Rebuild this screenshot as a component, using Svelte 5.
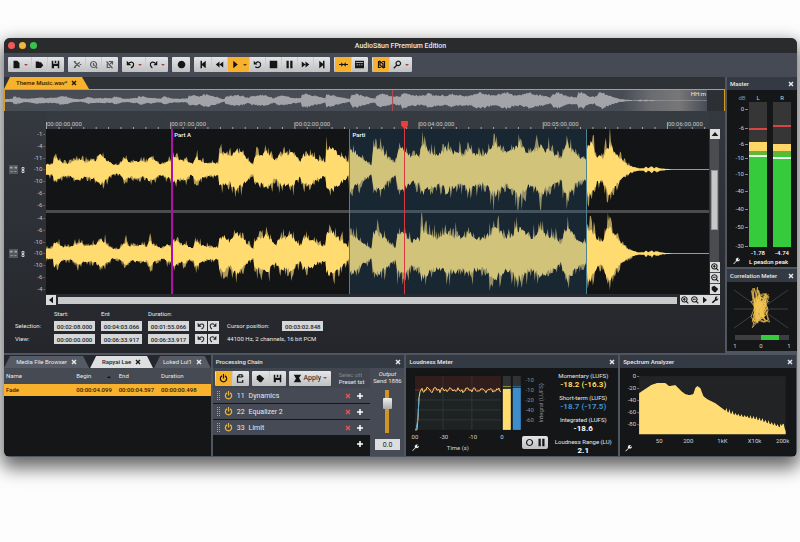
<script lang="ts">
    type Glyph = { fill?: string; line?: string };

    // 12x12 icon shapes
    const icons: Record<string, Glyph> = {
        file: { fill: "M2 1h5l3 3v7H2z" },
        folder: { fill: "M1 2h4l1 1h2l3 4-3 3.500H1z" },
        save: { fill: "M1 1h2v4h6V1h2v10H9V8H4v3H1zM5 1h2v3H5z" },
        cut: { line: "M2 3l7 6M2 9l7-6M1 2h2v2M1 10h2V8M9 6h2" },
        copy: { line: "M6 2a4 4 0 1 0 .1 0M9 9l2 2M6 4v3h2" },
        paste: { line: "M2 2l8 9M3 5v5h4M5 2h5v4M7 5l2-2" },
        undo: { fill: "M1 1v6h6z", line: "M4 4c4-2.500 7 0 6 3-.5 2-2 3-3.500 3.500" },
        redo: { fill: "M11 1v6H6z", line: "M8 4C4 1 1 4 2 7c.5 2 1.500 3 2.500 3.500" },
        record: { fill: "M6 1a5 5 0 1 0 .1 0z" },
        first: { fill: "M2 1h2v4l5-4v10L4 7v4H2z" },
        rewind: { fill: "M6 2v8L1 6zM11 2v8L6 6z" },
        play: { fill: "M3 1l6 5-6 5z" },
        loop: { fill: "M1 1v5h5z", line: "M4 4c3-3 7-.5 6 3-1 3-4 4-7 2" },
        stop: { fill: "M1 1h10v10H1z" },
        pause: { fill: "M2 1h3v10H2zM7 1h3v10H7z" },
        forward: { fill: "M6 2v8l5-4zM1 2v8l5-4z" },
        last: { fill: "M10 1H8v4L3 1v10l5-4v4h2z" },
        snap: { fill: "M3 3l3 3-3 3zM9 3L6 6l3 3z", line: "M0 6h12" },
        bands: { fill: "M0 1h12v10H0zM1 3v1h10V3zM2 6v1h2V6zM5 6v1h2V6zM8 6v1h2V6z" },
        marker: { line: "M5 2H2v8h3M7 2h3v8H7M4 2v5l4 3V5z" },
        zoom: { line: "M7 1.500a3 3 0 1 0 .1 0M5 7l-4 4" },
        zoomIn: { line: "M5 1a4 4 0 1 0 .1 0M8 8l3 3M3 5h4M5 3v4" },
        zoomOut: { line: "M5 1a4 4 0 1 0 .1 0M8 8l3 3M3 5h4" },
        left: { fill: "M9 1v10L3 6z" },
        right: { fill: "M3 1v10l6-5z" },
        up: { fill: "M6 3l5 6H1z" },
        wrench: { fill: "M1 9.500L6 5c-1-3 1-5 4-4L8 3l1 1.500 2-1c0 3-2 4-4 3.500L3 11z" },
        close: { fill: "M1 3l2-2 3 3 3-3 2 2-3 3 3 3-2 2-3-3-3 3-2-2 3-3z" },
        plus: { fill: "M4.500 0h3v4.500H12v3H7.500V12h-3V7.500H0v-3h4.500z" },
        power: { line: "M4 2.500a4.200 4.200 0 1 0 4 0M6 0v6" },
        clip: { line: "M8 3h2M4 3H2v8h7V8M4 1h4v3H4z" },
        tag: { fill: "M1 3l4-2 6 5-4 5H5L1 7z" },
        apply: { fill: "M1 1h10L8 5l3 6H1l3-5z" },
        ring: { line: "M6 2a4 4 0 1 0 .1 0" },
        link: { line: "M4 1h4v4H4zM4 7h4v4H4z" },
    };

    const toolGroups = [
        [["file", "menu"], ["folder"], ["save"]],
        [["cut", "dim"], ["copy", "dim"], ["paste", "dim"]],
        [["undo", "menu"], ["redo", "menu"]],
        [["record"]],
        [["first"], ["rewind"], ["play", "menu on"], ["loop"], ["stop"], ["pause"], ["forward"], ["last"]],
        [["snap", "on"], ["bands"]],
        [["marker", "on"], ["zoom", "menu"]],
    ];

    // Waveform envelope: x, half height
    const trackWidth = 662;
    const envelope = [
        [0, 5], [7, 5], [8, 12], [12, 10], [17, 6], [24, 6], [29, 9], [34, 10], [39, 7], [49, 9], [54, 13],
        [57, 13], [60, 9], [66, 5], [71, 4], [75, 6], [79, 11], [84, 7], [94, 8], [101, 7], [103, 13],
        [106, 10], [112, 6], [117, 5], [121, 8], [124, 7], [126, 12], [130, 12], [134, 9], [139, 9],
        [144, 6], [147, 6], [150, 13], [154, 9], [160, 6], [172, 6], [173, 14], [178, 16], [183, 12],
        [187, 17], [190, 19], [194, 17], [199, 12], [203, 7], [207, 4], [208, 13], [216, 15], [221, 17],
        [225, 13], [230, 8], [232, 14], [239, 15], [245, 17], [250, 11], [254, 7], [257, 14], [264, 14],
        [271, 9], [279, 7], [280, 18], [285, 21], [290, 16], [296, 12], [302, 6], [303, 19], [307, 18],
        [314, 12], [320, 8], [325, 4], [327, 20], [332, 20], [338, 15], [344, 9], [349, 6], [351, 17],
        [356, 20], [362, 15], [366, 11], [370, 15], [373, 12], [375, 24], [379, 20], [386, 16], [392, 15],
        [397, 17], [399, 22], [403, 18], [410, 17], [416, 14], [422, 20], [428, 16], [434, 14], [440, 16],
        [445, 22], [449, 24], [454, 20], [459, 16], [464, 17], [470, 24], [473, 25], [479, 18], [485, 16],
        [491, 20], [494, 24], [500, 18], [507, 16], [514, 9], [518, 22], [521, 25], [527, 17], [532, 12],
        [539, 10], [541, 25], [545, 24], [550, 13], [556, 11], [560, 22], [563, 24], [568, 17], [574, 10],
        [580, 5], [584, 3], [588, 2], [592, 1], [597, 1], [599, 3], [601, 1], [605, 3], [607, 1], [610, 2],
        [613, 1], [619, 0.5], [630, 0], [662, 0],
    ];

    function random(seed: number) {
        let s = seed;
        return () => {
            s = (s * 16807) % 2147483647;
            return s / 2147483647;
        };
    }

    function heightAt(x: number) {
        const i = Math.max(1, envelope.findIndex((p) => p[0] >= x));
        const [x0, h0] = envelope[i - 1];
        const [x1, h1] = envelope[i];
        return h0 + ((h1 - h0) * (x - x0)) / (x1 - x0);
    }

    function wave(seed: number, mid: number, gain: number, spikes: boolean) {
        const rnd = random(seed);
        const half = (dir: number) => {
            const points: string[] = [];
            for (let x = 0; x <= trackWidth; x++) {
                let h = heightAt(x) * (0.85 + rnd() * 0.35);
                const r = rnd();
                if (spikes)
                    h *= r > 0.9 ? 1.6 : r > 0.65 ? 1.35 : 1;
                points.push(`${x},${(mid + dir * Math.max(0.3, h * gain)).toFixed(1)}`);
            }
            return points;
        };
        return [...half(-1), ...half(1).reverse()].join(" ");
    }

    const tracks = [
        { seed: 71, levels: ["-1", "-4", "-11", "-10", "-10", "-6", "-6"] },
        { seed: 1234, levels: ["-4", "-6", "-10", "-10", "-10", "-6", "-4"] },
    ];

    const times = ["00:00:00.000", "00:01:00.000", "00:02:00.000", "00:04:00.000", "00:05:00.000", "00:06:00.000"];
    const percent = (x: number) => (x / trackWidth) * 100 + "%";

    const meterScale = [["0", 17], ["-6", 36], ["-6", 52], ["-10", 66], ["-10", 82], ["-40", 99], ["-40", 117], ["-50", 135], ["-30", 154]];
    const meters = [
        { x: 22, peak: 38, top: 52, hold: 65, name: "L", value: "-1.78" },
        { x: 46, peak: 35, top: 54, hold: 67, name: "R", value: "-4.74" },
    ];

    // Phase scope trace
    const scope = (() => {
        const rnd = random(99);
        let d = "M30 8";
        for (let i = 0; i < 60; i++) {
            const t = i * 1.9;
            const x = 33 + Math.sin(t * 1.7) * (4 + rnd() * 6);
            const y = 27 + Math.cos(t) * (8 + rnd() * 14);
            d += ` Q${(33 + (rnd() - 0.5) * 18).toFixed(1)} ${(27 + (rnd() - 0.5) * 46).toFixed(1)} ${x.toFixed(1)} ${y.toFixed(1)}`;
        }
        return d;
    })();

    const loudness = (() => {
        const rnd = random(5);
        let d = "M9 62L11 62 12 50 13 30 14 24 15 22";
        for (let x = 16; x <= 95; x++)
            d += ` ${x} ${(22 + Math.sin(x * 0.8) * 1.2 + (rnd() - 0.5) * 4).toFixed(1)}`;
        return d;
    })();

    const spectrum = (() => {
        const curve = [
            [0, 17], [6, 13], [12, 9], [18, 7], [26, 7], [30, 10], [36, 9], [38, 11], [42, 15], [46, 18],
            [50, 19], [54, 18], [56, 12], [58, 10], [61, 12], [64, 20], [68, 23], [76, 27], [84, 33],
            [96, 38], [120, 43], [141, 50], [143, 47], [146, 54],
        ];
        const rnd = random(41);
        let d = "M0 58";
        for (let x = 0; x <= 146; x++) {
            const i = Math.max(1, curve.findIndex((p) => p[0] >= x));
            const [a, b] = [curve[i - 1], curve[i]];
            const noise = x > 84 ? (x % 3 === 0 ? -2 : 1) * (0.4 + rnd()) : 0;
            d += `L${x} ${(a[1] + ((b[1] - a[1]) * (x - a[0])) / (b[0] - a[0]) + noise).toFixed(1)}`;
        }
        return d + "V58Z";
    })();

    const effects = [
        { no: "11", name: "Dynamics" },
        { no: "22", name: "Equalizer 2" },
        { no: "33", name: "Limit" },
    ];

    const stats = [
        { name: "Momentary (LUFS)", value: "-18.2 (-16.3)", tone: "yellow" },
        { name: "Short-term (LUFS)", value: "-18.7 (-17.5)", tone: "blue" },
        { name: "Integrated (LUFS)", value: "-18.6", tone: "white" },
        { name: "Loudness Range (LU)", value: "2.1", tone: "white" },
    ];
</script>

{#snippet icon(name: string)}
    <svg class="icon" viewBox="0 0 12 12" aria-hidden="true">
        {#if icons[name].fill}<path d={icons[name].fill} fill="currentColor" fill-rule="evenodd" />{/if}
        {#if icons[name].line}<path d={icons[name].line} fill="none" stroke="currentColor" stroke-width="1.6" />{/if}
    </svg>
{/snippet}

{#snippet panelHead(title: string)}
    <header class="panel-head">
        <h2>{title}</h2>
        <button class="bare" aria-label="Close {title}">{@render icon("close")}</button>
    </header>
{/snippet}

<div class="desktop">
<div class="window">
    <div class="titlebar">
        <div class="lights"><i class="red"></i><i class="amber"></i><i class="green"></i></div>
        <h1>AudioSäun FPremium Edition</h1>
    </div>

    <div class="toolbar">
        {#each toolGroups as group}
            <div class="group">
                {#each group as [name, kind]}
                    <button class="tool {kind ?? ''}" aria-label={name}>
                        {@render icon(name)}
                        {#if kind?.includes("menu")}<span class="caret"></span>{/if}
                    </button>
                {/each}
            </div>
        {/each}
    </div>

    <div class="middle">
        <main class="editor">
            <div class="file-tabs">
                <div class="file-tab">
                    <span>Theme Music.wav*</span>
                    <button class="bare" aria-label="Close file">{@render icon("close")}</button>
                </div>
            </div>

            <div class="overview">
                <div class="overview-wave">
                    <svg viewBox="0 0 662 22" preserveAspectRatio="none">
                        <polygon points={wave(31, 11, 0.32, false)} fill="#a3a4aa" />
                        <rect x="365" width="1" height="22" fill="#b04a50" />
                    </svg>
                    <span class="overview-label">HH:m</span>
                </div>
            </div>

            <div class="tracks">
                <div class="gutter">
                    {#each tracks as track}
                        <div class="gutter-track">
                            <button class="bare mute" aria-label="Channel">
                                <svg viewBox="0 0 10 10"><rect width="10" height="10" fill="#54575c" /><path d="M1 2h3v2H1zM6 2h3v2H6zM1 7l2 1 2-1 2 1 2-1" fill="#a5a6a8" /></svg>
                            </button>
                            <span class="link">{@render icon("link")}</span>
                            <ol class="levels">
                                {#each track.levels as level}<li>{level}</li>{/each}
                            </ol>
                        </div>
                    {/each}
                </div>

                <div class="timeline">
                    <div class="ruler">
                        <svg viewBox="0 0 662 18" preserveAspectRatio="none">
                            {#each Array(54) as _, i}
                                <rect x={(i * 124) / 10} y={i % 10 ? 16 : 11} width="1" height="7" fill="#a4a7ab" />
                            {/each}
                        </svg>
                        {#each times as time, i}
                            <span class="time" style="left: {percent(i * 124)}">{time}</span>
                        {/each}
                    </div>
                    {#each tracks as track}
                        <svg class="track" viewBox="0 0 662 81" preserveAspectRatio="none">
                            <polygon points={wave(track.seed, 40.5, 1, true)} fill="#b39c58" />
                            <polygon points={wave(track.seed, 40.5, 1, false)} fill="#ffdb70" />
                        </svg>
                    {/each}
                    <div class="region" style="left: {percent(303)}; width: {percent(237)}"><span>Parti</span></div>
                    <div class="part" style="left: {percent(125)}"><span>Part A</span></div>
                    <div class="playhead" style="left: {percent(357)}">
                        <svg viewBox="0 0 6 7"><path d="M0 0h6v4L3 7 0 4z" fill="#ee3d3d" /></svg>
                    </div>
                </div>

                <div class="vscroll">
                    <button class="step" aria-label="Scroll up">{@render icon("up")}</button>
                    <div class="vtrack"><div class="vthumb"></div></div>
                    <button class="step" aria-label="Zoom in vertically">{@render icon("zoomIn")}</button>
                    <button class="step" aria-label="Zoom out vertically">{@render icon("zoomOut")}</button>
                    <button class="step" aria-label="Fit height">{@render icon("tag")}</button>
                </div>
            </div>

            <div class="hscroll">
                <button class="step" aria-label="Scroll left">{@render icon("left")}</button>
                <div class="hthumb"></div>
                <button class="step" aria-label="Zoom in">{@render icon("zoomIn")}</button>
                <button class="step" aria-label="Zoom out">{@render icon("zoomOut")}</button>
                <button class="step" aria-label="Scroll right">{@render icon("right")}</button>
                <button class="step" aria-label="Scroll settings">{@render icon("wrench")}</button>
            </div>

            <div class="info">
                <span></span>
                <label for="sel-start">Start:</label>
                <label for="sel-end">Ent</label>
                <label for="sel-length">Duration:</label>
                <span></span>
                <span></span>

                <span>Selection:</span>
                <input id="sel-start" value="00:02:08.000">
                <input id="sel-end" value="00:04:03.066">
                <input id="sel-length" value="00:01:55.066">
                <div class="pair">
                    <button aria-label="Undo selection">{@render icon("undo")}</button>
                    <button aria-label="Redo selection">{@render icon("redo")}</button>
                </div>
                <div class="note">
                    <label for="cursor">Cursor position:</label>
                    <input id="cursor" value="00:03:02.848">
                </div>

                <span>View:</span>
                <input aria-label="View start" value="00:00:00.000">
                <input aria-label="View end" value="00:06:33.917">
                <input aria-label="View duration" value="00:06:33.917">
                <div class="pair">
                    <button aria-label="Undo view">{@render icon("undo")}</button>
                    <button aria-label="Redo view">{@render icon("redo")}</button>
                </div>
                <div class="note">44100 Hz, 2 channels, 16 bit PCM</div>
            </div>
        </main>

        <aside class="side">
            <section class="panel">
                {@render panelHead("Master")}
                <svg class="meter" viewBox="0 0 70 177">
                    <text x="15" y="10" text-anchor="middle" class="faint">dB</text>
                    {#each meterScale as [label, y]}
                        <text x="17" y={Number(y) + 4} text-anchor="end">{label}</text>
                        <rect x="18" y={Number(y) + 2} width="3" height="1" fill="#888" />
                    {/each}
                    {#each meters as m}
                        <text x={m.x + 9} y="10" text-anchor="middle">{m.name}</text>
                        <rect x={m.x} y="12" width="18" height="145" fill="#363636" />
                        <rect x={m.x} y={m.peak} width="18" height="2" fill="#d84545" />
                        <rect x={m.x} y={m.top} width="18" height={61 - m.top} fill="#ffd767" />
                        <rect x={m.x} y="61" width="18" height="4" fill="#63b536" />
                        <rect x={m.x} y="65" width="18" height="92" fill="#36cb3c" />
                        <rect x={m.x} y={m.hold} width="18" height="2" fill="#e8f8e8" />
                        <text x={m.x + 9} y="165" text-anchor="middle" class="strong">{m.value}</text>
                    {/each}
                    <path d="M6 174l3-3c-1-2 1-4 3-3l-1 1v1l2-1c0 2-2 3-3 2l-3 3z" fill="#eee" />
                    <text x="22" y="174" class="strong">L peadɑn peak</text>
                </svg>
            </section>
            <section class="panel">
                {@render panelHead("Correlation Meter")}
                <svg class="meter" viewBox="0 0 70 69">
                    <path d="M7 8l54 38M61 8L7 46M7 27h54" stroke="#3c3f42" fill="none" />
                    <path d={scope} stroke="#f2c451" stroke-width=".7" fill="none" />
                    <rect x="8" y="53" width="54" height="5" fill="#3c3e40" />
                    <rect x="34" y="53" width="18" height="5" fill="#36cb3c" />
                    <text x="8" y="66" text-anchor="middle">1</text>
                    <text x="34" y="66" text-anchor="middle">0</text>
                    <text x="62" y="66" text-anchor="middle">1</text>
                </svg>
            </section>
        </aside>
    </div>

    <div class="bottom">
        <section class="panel">
            <div class="tabs">
                <button class="tab">Media File Browser {@render icon("close")}</button>
                <button class="tab active">Rapyai Lae {@render icon("close")}</button>
                <button class="tab">Loked Lul1 {@render icon("close")}</button>
            </div>
            <table>
                <thead>
                    <tr><th class="name">Name</th><th>Begin <span class="sort"></span></th><th>End</th><th class="last">Duration</th></tr>
                </thead>
                <tbody>
                    <tr><td>Fade</td><td>00:00:04.099</td><td>00:00:04.597</td><td>00:00:00.498</td></tr>
                </tbody>
            </table>
        </section>

        <section class="panel">
            {@render panelHead("Processing Chain")}
            <div class="chain">
                <div class="chain-main">
                    <div class="chain-tools">
                        <div class="group">
                            <button class="tool on" aria-label="Enable chain">{@render icon("power")}</button>
                            <button class="tool" aria-label="Paste chain">{@render icon("clip")}</button>
                        </div>
                        <div class="group">
                            <button class="tool" aria-label="Preset">{@render icon("tag")}</button>
                            <button class="tool" aria-label="Save chain">{@render icon("save")}</button>
                        </div>
                        <div class="group">
                            <button class="tool apply">{@render icon("apply")}Apply<span class="caret"></span></button>
                        </div>
                        <p class="preset"><span>Selec ott</span><br>Preset tst</p>
                    </div>
                    <ul class="effects">
                        {#each effects as effect}
                            <li>
                                <span class="grip"></span>
                                <button class="bare power" aria-label="Toggle {effect.name}">{@render icon("power")}</button>
                                <span class="number">{effect.no}</span>
                                <span class="effect-name">{effect.name}</span>
                                <button class="bare remove" aria-label="Remove {effect.name}">{@render icon("close")}</button>
                                <button class="bare add" aria-label="Add after {effect.name}">{@render icon("plus")}</button>
                            </li>
                        {/each}
                        <li class="empty"><button class="bare add" aria-label="Add effect">{@render icon("plus")}</button></li>
                    </ul>
                </div>
                <div class="output">
                    <label for="gain"><i>Output</i><br>Send 1886</label>
                    <input id="gain" type="range" min="0" max="100" value="76">
                    <input class="gain-value" aria-label="Gain" value="0.0">
                </div>
            </div>
        </section>

        <section class="panel">
            {@render panelHead("Loudness Meter")}
            <div class="loudness">
                <svg class="chart" viewBox="0 0 142 88">
                    <rect x="9" y="8" width="86" height="54" fill="#1e2223" />
                    <rect x="9" y="8" width="86" height="14" fill="#321d1d" />
                    <path d="M9 32h86M9 42h86M9 52h86M37 8v54M66 8v54" stroke="#303536" />
                    <path d="M9 22h86" stroke="#8e2a2a" />
                    <path d={loudness} stroke="#f5cf6b" fill="none" />
                    <path d="M10 62L12 50 13 30" stroke="#5da3cc" fill="none" />
                    <rect x="97" y="8" width="8" height="54" fill="#303335" />
                    <rect x="107" y="8" width="8" height="54" fill="#303335" />
                    <rect x="97" y="21" width="8" height="41" fill="#ffdc6b" />
                    <rect x="97" y="18" width="8" height="1" fill="#8f8b3a" />
                    <rect x="107" y="20" width="8" height="42" fill="#3c8dc9" />
                    <rect x="107" y="18" width="8" height="1" fill="#38617e" />
                    {#each ["-10", "-10", "-20", "-40", "-60"] as label, i}
                        <text x="128" y={14 + i * 10} text-anchor="end" class="faint">{label}</text>
                    {/each}
                    <text x="-35" y="137" transform="rotate(-90)" text-anchor="middle" class="faint">Integral (LUFS)</text>
                    {#each ["00", "-30", "-10", "0"] as label, i}
                        <text x={9 + i * 29} y="71" text-anchor="middle">{label}</text>
                    {/each}
                    <text x="52" y="82" text-anchor="middle">Time (s)</text>
                    <path d="M6 83l3-3c-1-2 1-4 3-3l-1 1v1l2-1c0 2-2 3-3 2l-3 3z" fill="#eee" />
                </svg>
                <div class="group transport">
                    <button class="tool" aria-label="Reset">{@render icon("ring")}</button>
                    <button class="tool" aria-label="Pause">{@render icon("pause")}</button>
                </div>
                <dl class="stats">
                    {#each stats as stat}
                        <dt>{stat.name}</dt>
                        <dd class={stat.tone}>{stat.value}</dd>
                    {/each}
                </dl>
            </div>
        </section>

        <section class="panel">
            {@render panelHead("Spectrum Analyzer")}
            <svg class="chart" viewBox="0 0 175 88">
                <rect x="19" y="8" width="146" height="58" fill="#212324" />
                <g transform="translate(19 8)"><path d={spectrum} fill="#ffdc74" /></g>
                {#each ["0", "-20", "-40", "-60", "-80"] as label, i}
                    <text x="16" y={10 + i * 12} text-anchor="end">{label}</text>
                    <rect x="17" y={8 + i * 12} width="2" height="1" fill="#777" />
                {/each}
                {#each [["50", 39], ["200", 68], ["1kK", 102], ["X10k", 134], ["200k", 162]] as [label, x]}
                    <text {x} y="75" text-anchor="middle">{label}</text>
                {/each}
                <path d="M5 83l3-3c-1-2 1-4 3-3l-1 1v1l2-1c0 2-2 3-3 2l-3 3z" fill="#eee" />
            </svg>
        </section>
    </div>
</div>
</div>

<style>
    :global(body) {
        background: #fdfdfd;
    }

    .desktop {
        padding: 38px 3px 60px 4px;
    }

    .window {
        border-radius: 6px;
        overflow: hidden;
        background: #50565f;
        box-shadow: 0 8px 18px 3px rgba(0, 0, 0, 0.6);
        color: #e8e9ea;
        font: 6px/8px Roboto, "Liberation Sans", sans-serif;
    }

    .window :global(*) {
        box-sizing: border-box;
    }

    h1, h2, p, ol, ul, dl, dd {
        margin: 0;
        padding: 0;
        list-style: none;
    }

    h1, h2 {
        font-weight: 500;
    }

    button, input {
        margin: 0;
        padding: 0;
        border: 0;
        border-radius: 0;
        font: inherit;
        color: inherit;
    }

    button {
        display: flex;
        align-items: center;
        justify-content: center;
        background: none;
    }

    svg {
        display: block;
    }

    .icon {
        width: 8px;
        height: 8px;
        flex: none;
    }

    .tool .icon {
        width: 9px;
        height: 9px;
    }

    .bare .icon {
        width: 6px;
        height: 6px;
    }

    .titlebar {
        display: grid;
        grid-template-columns: 1fr auto 1fr;
        align-items: center;
        height: 15px;
        padding: 0 4px;
        background: #2a2b2d;
    }

    h1 {
        font-size: 7px;
    }

    .lights {
        display: flex;
        gap: 4px;
    }

    .lights i {
        width: 7px;
        height: 7px;
        border-radius: 50%;
    }

    .red { background: #f4595a; }
    .amber { background: #f5b43c; }
    .green { background: #37c44c; }

    .toolbar {
        display: flex;
        align-items: center;
        gap: 4px;
        height: 24px;
        padding: 0 4px 1px;
        background: #454a54;
    }

    .group {
        display: flex;
        padding: 0 1px;
        border-radius: 1px;
        background: linear-gradient(#e4e5e6, #bfc0c2);
    }

    .tool {
        width: 16px;
        height: 15px;
        color: #151515;
    }

    .tool + .tool {
        border-left: 1px solid #c9cacb;
    }

    .tool.menu {
        width: 22px;
        gap: 3px;
    }

    .tool.dim {
        color: #55575a;
    }

    .tool.on {
        background: #f8b12c;
    }

    .caret {
        border: 2px solid transparent;
        border-top-color: #a5484c;
        border-bottom: 0;
    }

    .on .caret {
        border-top-color: #5a3a08;
    }

    .middle {
        display: grid;
        grid-template-columns: 1fr 70px;
        gap: 2px;
    }

    .editor {
        background: linear-gradient(#373b42, #24262b);
    }

    .file-tabs {
        height: 12px;
        background: #2e3237;
    }

    .file-tab {
        display: flex;
        align-items: center;
        gap: 4px;
        width: 85px;
        height: 12px;
        padding-left: 12px;
        background: #f8b12c;
        color: #2b1d00;
        font-weight: 500;
        clip-path: polygon(6px 0, 78px 0, 100% 100%, 0 100%);
    }

    .overview {
        height: 22px;
        padding-right: 17px;
        border: 1px solid #d9981f;
        border-bottom: 0;
        background: #2c2f34;
    }

    .overview-wave {
        position: relative;
        background: linear-gradient(90deg, #484c55 88%, #6a6c70 92%, #777 96%, #484c55);
    }

    .overview-wave svg {
        width: 100%;
        height: 21px;
    }

    .overview-label {
        position: absolute;
        top: 0;
        right: 1px;
    }

    .tracks {
        display: grid;
        grid-template-columns: 42px 1fr 10px;
        padding-right: 6px;
    }

    .gutter {
        display: grid;
        grid-template-rows: 81px 81px;
        gap: 3px;
        padding-top: 18px;
    }

    .gutter-track {
        display: grid;
        grid-template-columns: 10px 5px 1fr;
        gap: 2px;
        align-items: center;
        padding-left: 4px;
    }

    .mute svg {
        width: 9px;
        height: 9px;
    }

    .link .icon {
        width: 6px;
        height: 8px;
    }

    .levels {
        display: flex;
        flex-direction: column;
        justify-content: space-between;
        height: 79px;
        padding-right: 1px;
        text-align: right;
        color: #c3c5c8;
    }

    .levels li::after {
        content: "-";
        margin-left: 1px;
    }

    .timeline {
        position: relative;
        display: flex;
        flex-direction: column;
        gap: 3px;
        background: #4b4c4e;
    }

    .ruler {
        position: relative;
        height: 18px;
        margin-bottom: -3px;
        background: #363a41;
    }

    .ruler svg {
        width: 100%;
        height: 18px;
    }

    .time {
        position: absolute;
        top: 9px;
        padding-left: 1px;
        color: #c6c8cb;
    }

    .track {
        width: 100%;
        height: 81px;
        background: #131415;
    }

    .region, .part, .playhead {
        position: absolute;
        top: 18px;
        bottom: 0;
    }

    .region {
        border-left: 1px solid #4c8296;
        border-right: 1px solid #4c8296;
        background: rgba(50, 110, 160, 0.22);
    }

    .region span, .part span {
        display: block;
        padding: 2px;
        color: #fff;
        font-weight: 500;
        white-space: nowrap;
    }

    .part {
        border-left: 2px solid #b010a4;
    }

    .part span {
        padding-left: 1px;
    }

    .playhead {
        top: 10px;
        border-left: 1px solid #d93a42;
    }

    .playhead svg {
        width: 7px;
        height: 8px;
        margin-left: -4px;
    }

    .vscroll {
        display: flex;
        flex-direction: column;
        gap: 1px;
        margin: 18px 0 0 1px;
        background: #4a4c50;
    }

    .step {
        width: 10px;
        height: 10px;
        flex: none;
        background: #dcdcdd;
        color: #181818;
    }

    .vtrack {
        flex: 1;
        padding: 30px 1px;
    }

    .vthumb {
        height: 60px;
        background: #c6c7c9;
        border: 1px solid #96979a;
    }

    .hscroll {
        display: flex;
        align-items: center;
        height: 12px;
        padding: 0 5px 0 42px;
    }

    .hthumb {
        flex: 1;
        height: 7px;
        margin: 0 3px 0 2px;
        background: #c9cacb;
    }

    .info {
        display: grid;
        grid-template-columns: 33px 41px 41px 41px 24px 1fr;
        grid-template-rows: 8px 10px 10px;
        gap: 3px 6px;
        align-items: center;
        padding: 4px 0 9px 11px;
    }

    .info input {
        width: 41px;
        height: 10px;
        background: #d6d7d8;
        color: #222;
        font-weight: 500;
        text-align: center;
    }

    .pair {
        display: grid;
        grid-template-columns: 1fr 1fr;
        gap: 1px;
    }

    .pair button {
        height: 10px;
        background: #dadbdc;
        color: #222;
    }

    .note {
        display: flex;
        align-items: center;
        gap: 13px;
        padding-left: 2px;
    }

    .side {
        display: flex;
        flex-direction: column;
        gap: 2px;
    }

    .panel {
        display: flex;
        flex-direction: column;
        min-width: 0;
        background: #141618;
    }

    .panel-head {
        display: flex;
        align-items: center;
        justify-content: space-between;
        height: 13px;
        padding: 0 3px;
        background: #343a43;
    }

    h2 {
        font-size: 6px;
        white-space: nowrap;
    }

    text {
        font-size: 6px;
        fill: #d0d1d2;
    }

    text.faint {
        fill: #8b8d90;
    }

    text.strong {
        fill: #fff;
        font-weight: 500;
    }

    .meter, .chart {
        width: 100%;
    }

    .bottom {
        display: grid;
        grid-template-columns: 207fr 192fr 212fr 176fr;
        gap: 2px;
        padding: 2px 1px 1px 0;
    }

    .tabs {
        display: flex;
        gap: 1px;
        height: 13px;
        padding-top: 1px;
        background: #24272b;
    }

    .tab {
        gap: 4px;
        flex: 56;
        background: #555a64;
        white-space: nowrap;
        clip-path: polygon(6px 0, calc(100% - 6px) 0, 100% 100%, 0 100%);
    }

    .tab:first-child {
        flex: 84;
    }

    .tab.active {
        flex: 62;
        background: #dedfe0;
        color: #1c1c1c;
        font-weight: 500;
    }

    .tab .icon {
        width: 6px;
        height: 6px;
    }

    table {
        width: 100%;
        border-collapse: collapse;
        table-layout: fixed;
    }

    th, td {
        padding: 0 0 0 2px;
        text-align: left;
        font-weight: 500;
        white-space: nowrap;
    }

    th {
        height: 16px;
        background: #454a53;
        font-weight: 400;
    }

    .name {
        width: 34%;
    }

    .last {
        width: 25%;
    }

    .sort {
        display: inline-block;
        margin-left: 14px;
        border: 2px solid transparent;
        border-bottom-color: #111;
        border-top: 0;
    }

    td {
        height: 12px;
        background: #f8b12c;
        color: #2b1d00;
    }

    .chain {
        display: grid;
        grid-template-columns: 1fr 34px;
        flex: 1;
    }

    .chain-main {
        display: flex;
        flex-direction: column;
    }

    .chain-tools {
        display: flex;
        align-items: center;
        gap: 3px;
        height: 20px;
        padding: 0 2px;
        background: #40454e;
    }

    .apply {
        width: 40px;
        gap: 2px;
        font-size: 7px;
    }

    .preset {
        margin-left: 5px;
        line-height: 7px;
        white-space: nowrap;
    }

    .preset span {
        color: #85888e;
    }

    .effects li {
        display: flex;
        align-items: center;
        gap: 4px;
        height: 15px;
        margin-bottom: 1px;
        padding: 0 7px 0 4px;
        background: #454a54;
    }

    .effects .empty {
        justify-content: flex-end;
        background: none;
    }

    .grip {
        width: 3px;
        height: 9px;
        border: 1px dotted #a0a3a8;
    }

    .power {
        color: #eeb23c;
    }

    .power .icon {
        width: 9px;
        height: 9px;
    }

    .number, .effect-name {
        font-size: 7px;
    }

    .effect-name {
        flex: 1;
    }

    .remove {
        color: #ee4f52;
    }

    .add {
        margin-left: 2px;
        color: #fff;
    }

    .output {
        display: flex;
        flex-direction: column;
        align-items: center;
        gap: 6px;
        padding: 2px 0 4px;
        background: #454a54;
    }

    .output label {
        line-height: 7px;
        text-align: center;
        white-space: nowrap;
    }

    input[type="range"] {
        appearance: none;
        writing-mode: vertical-lr;
        direction: rtl;
        width: 10px;
        height: 43px;
        background: linear-gradient(90deg, transparent 3px, #cf9526 3px 7px, transparent 7px);
    }

    input[type="range"]::-webkit-slider-thumb {
        appearance: none;
        width: 9px;
        height: 11px;
        border-radius: 1px;
        background: linear-gradient(#f0f0f0, #a9abad);
    }

    .gain-value {
        width: 25px;
        height: 11px;
        background: #dcddde;
        color: #222;
        font-size: 7px;
        text-align: center;
    }

    .loudness {
        display: grid;
        grid-template-columns: 1fr 70px;
    }

    .loudness .chart {
        grid-area: 1 / 1;
    }

    .transport {
        grid-area: 1 / 1;
        place-self: end;
        margin: 0 0 7px;
        border-radius: 2px;
    }

    .transport .tool {
        width: 12px;
        height: 13px;
    }

    .transport .tool + .tool {
        border: 0;
    }

    .stats {
        padding-top: 4px;
        text-align: center;
        white-space: nowrap;
    }

    dd {
        margin-bottom: 4px;
        font-size: 8px;
        font-weight: 700;
        line-height: 10px;
    }

    dd:last-child {
        margin-bottom: 0;
    }

    .yellow { color: #f6dc5e; }
    .blue { color: #3e94d2; }
    .white { color: #fff; }
</style>
